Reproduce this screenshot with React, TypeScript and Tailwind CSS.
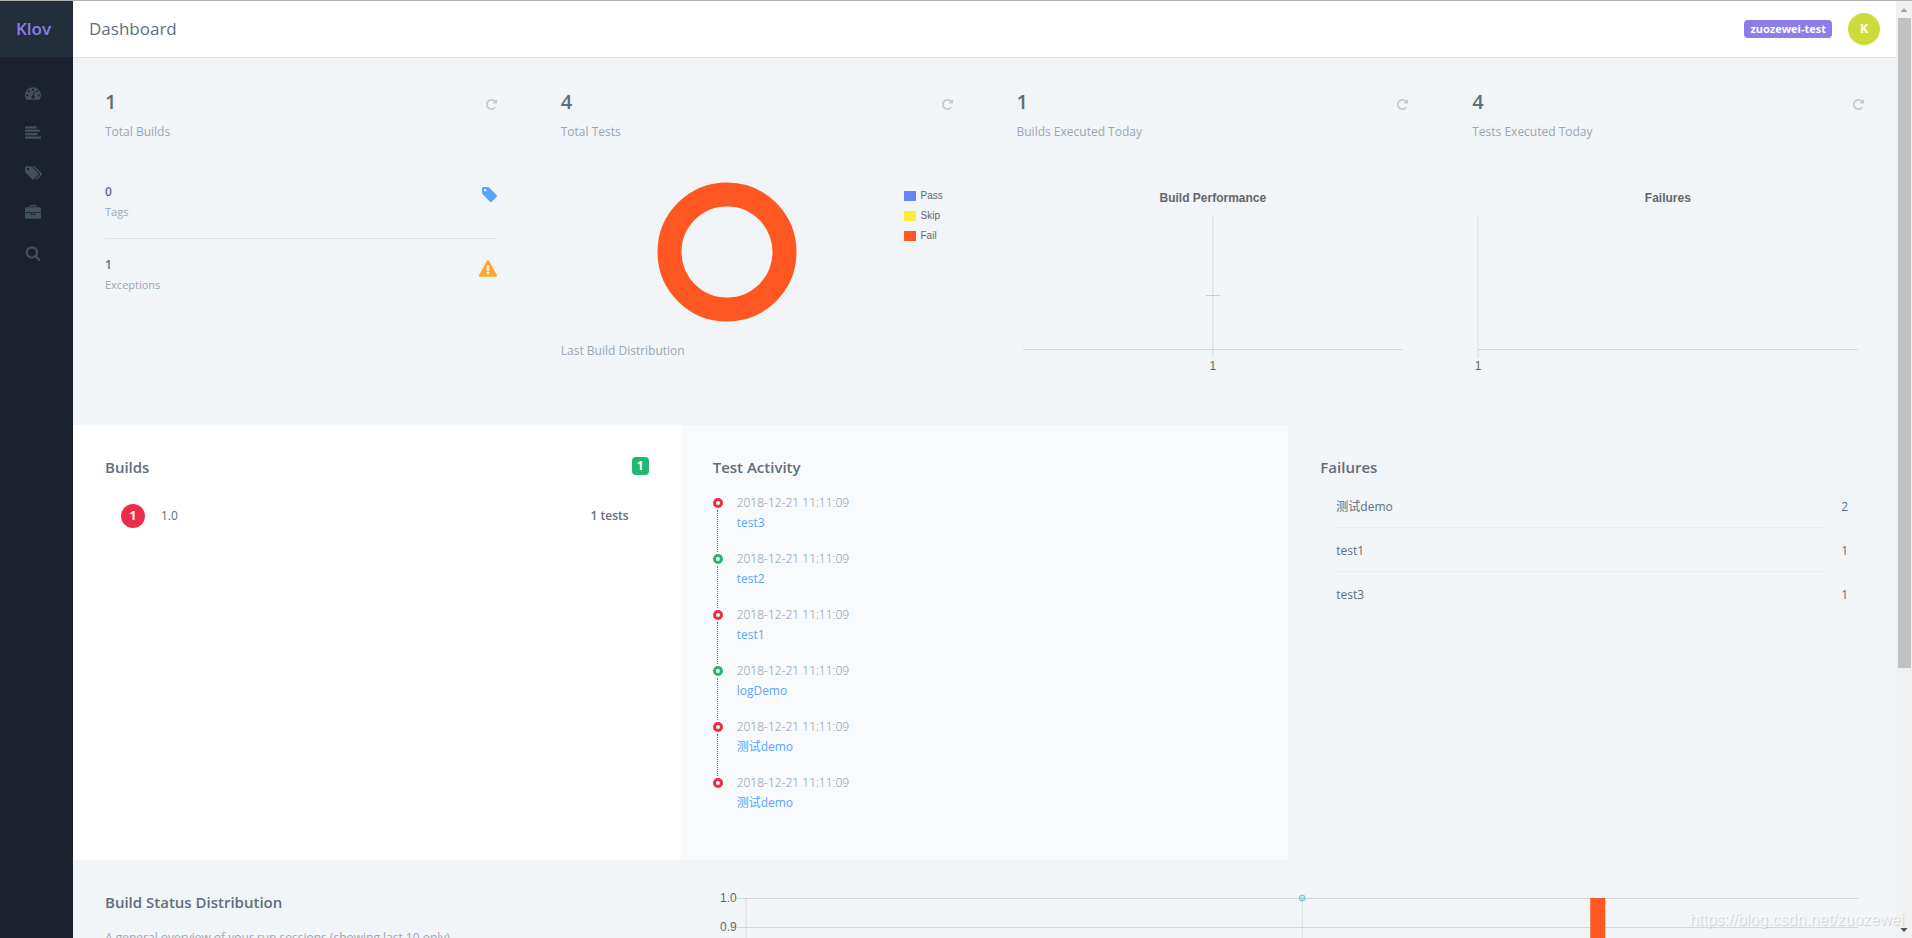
import React from "react";

const ICONS = {
  dashboard: {
    box: "0 0 1792 1792",
    d: "M384 1152q0-53-37.5-90.5t-90.5-37.5-90.5 37.5-37.5 90.5 37.5 90.5 90.5 37.5 90.5-37.5 37.5-90.5zm192-448q0-53-37.5-90.5t-90.5-37.5-90.5 37.5-37.5 90.5 37.5 90.5 90.5 37.5 90.5-37.5 37.5-90.5zm428 481l101-382q6-26-7.5-48.5t-38.5-29.5-48 6.5-30 39.5l-101 382q-60 5-107 43.5t-63 98.5q-20 77 20 146t117 89 146-20 89-117q16-60-6-117t-72-91zm660-33q0-53-37.5-90.5t-90.5-37.5-90.5 37.5-37.5 90.5 37.5 90.5 90.5 37.5 90.5-37.5 37.5-90.5zm-640-640q0-53-37.5-90.5t-90.5-37.5-90.5 37.5-37.5 90.5 37.5 90.5 90.5 37.5 90.5-37.5 37.5-90.5zm448 192q0-53-37.5-90.5t-90.5-37.5-90.5 37.5-37.5 90.5 37.5 90.5 90.5 37.5 90.5-37.5 37.5-90.5zm320 448q0 261-141 483-19 29-54 29h-1402q-35 0-54-29-141-221-141-483 0-182 71-348t191-286 286-191 348-71 348 71 286 191 191 286 71 348z",
  },
  list: {
    box: "0 0 1792 1792",
    d: "M1792 1344v128q0 26-19 45t-45 19h-1664q-26 0-45-19t-19-45v-128q0-26 19-45t45-19h1664q26 0 45 19t19 45zm-384-384v128q0 26-19 45t-45 19h-1280q-26 0-45-19t-19-45v-128q0-26 19-45t45-19h1280q26 0 45 19t19 45zm256-384v128q0 26-19 45t-45 19h-1536q-26 0-45-19t-19-45v-128q0-26 19-45t45-19h1536q26 0 45 19t19 45zm-384-384v128q0 26-19 45t-45 19h-1152q-26 0-45-19t-19-45v-128q0-26 19-45t45-19h1152q26 0 45 19t19 45z",
  },
  tags: {
    box: "120 0 1792 1792",
    d: "M576 448q0-53-37.5-90.5t-90.5-37.5-90.5 37.5-37.5 90.5 37.5 90.5 90.5 37.5 90.5-37.5 37.5-90.5zm1067 576q0 53-37 90l-491 492q-39 37-91 37-53 0-90-37l-715-716q-38-37-64.5-101t-26.5-117v-416q0-52 38-90t90-38h416q53 0 117 26.5t102 64.5l715 714q37 39 37 91zm384 0q0 53-37 90l-491 492q-39 37-91 37-36 0-59-14t-53-45l470-470q37-37 37-90 0-52-37-91l-715-714q-38-38-102-64.5t-117-26.5h224q53 0 117 26.5t102 64.5l715 714q37 39 37 91z",
  },
  briefcase: {
    box: "0 0 1792 1792",
    d: "M640 256h512v-128h-512v128zm1152 640v480q0 66-47 113t-113 47h-1472q-66 0-113-47t-47-113v-480h672v160q0 26 19 45t45 19h320q26 0 45-19t19-45v-160h672zm-768 0v128h-256v-128h256zm768-480v384h-1792v-384q0-66 47-113t113-47h352v-160q0-40 28-68t68-28h576q40 0 68 28t28 68v160h352q66 0 113 47t47 113z",
  },
  search: {
    box: "0 0 1792 1792",
    d: "M1216 832q0-185-131.5-316.5t-316.5-131.5-316.5 131.5-131.5 316.5 131.5 316.5 316.5 131.5 316.5-131.5 131.5-316.5zm512 832q0 52-38 90t-90 38q-54 0-90-38l-343-342q-179 124-399 124-143 0-273.5-55.5t-225-150-150-225-55.5-273.5 55.5-273.5 150-225 225-150 273.5-55.5 273.5 55.5 225 150 150 225 55.5 273.5q0 220-124 399l343 343q37 37 37 90z",
  },
  repeat: {
    box: "128 128 1536 1536",
    d: "M1664 256v448q0 26-19 45t-45 19h-448q-42 0-59-40-17-39 14-69l138-138q-148-137-349-137-104 0-198.5 40.5t-163.5 109.5-109.5 163.5-40.5 198.5 40.5 198.5 109.5 163.5 163.5 109.5 198.5 40.5q119 0 225-52t179-147q7-10 23-12 15 0 25 9l137 138q9 8 9.5 20.5t-7.5 22.5q-109 132-264 204.5t-327 72.5q-156 0-298-61t-245-164-164-245-61-298 61-298 164-245 245-164 298-61q147 0 284.5 55.5t244.5 156.5l130-129q29-31 70-14 39 17 39 59z",
  },
  tag: {
    box: "128 128 1515 1515",
    d: "M576 448q0-53-37.5-90.5t-90.5-37.5-90.5 37.5-37.5 90.5 37.5 90.5 90.5 37.5 90.5-37.5 37.5-90.5zm1067 576q0 53-37 90l-491 492q-39 37-91 37-53 0-90-37l-715-716q-38-37-64.5-101t-26.5-117v-416q0-52 38-90t90-38h416q53 0 117 26.5t102 64.5l715 714q37 39 37 91z",
  },
  warning: {
    box: "0 0 1792 1664",
    d: "M1024 1375v-190q0-14-9.5-23.5t-22.5-9.5h-192q-13 0-22.5 9.5t-9.5 23.5v190q0 14 9.5 23.5t22.5 9.5h192q13 0 22.5-9.5t9.5-23.5zm-2-374l18-459q0-12-10-19-13-11-24-11h-220q-11 0-24 11-10 7-10 21l17 457q0 10 10 16.5t24 6.5h185q14 0 23.5-6.5t10.5-16.5zm-14-934l768 1408q35 63-2 126-17 29-46.5 46t-63.5 17h-1536q-34 0-63.5-17t-46.5-46q-37-63-2-126l768-1408q17-31 47-49t65-18 65 18 47 49z",
  },
};

type IconName = keyof typeof ICONS;

function Icon({ name, className }: { name: IconName; className: string }) {
  return (
    <svg viewBox={ICONS[name].box} className={className} fill="currentColor" overflow="visible" aria-hidden="true">
      <path d={ICONS[name].d} fillRule="nonzero" />
    </svg>
  );
}

const NAV: { icon: IconName; label: string }[] = [
  { icon: "dashboard", label: "Dashboard" },
  { icon: "list", label: "Builds" },
  { icon: "tags", label: "Tags" },
  { icon: "briefcase", label: "Projects" },
  { icon: "search", label: "Search" },
];

function Sidebar() {
  return (
    <aside className="flex w-[73px] shrink-0 flex-col bg-[#1b222d]">
      <a href="#" className="flex h-14 items-center bg-[#232e3b] pl-4 text-[17px] font-semibold text-[#8e7ce6]">
        Klov
      </a>
      <nav className="mt-4 flex flex-col text-[#435060]">
        {NAV.map((item) => (
          <a key={item.icon} href="#" aria-label={item.label} className="flex h-10 items-center pl-[25px]">
            <Icon name={item.icon} className="size-4" />
          </a>
        ))}
      </nav>
    </aside>
  );
}

function Stat({ value, label, children }: { value: string; label: string; children: React.ReactNode }) {
  return (
    <div className="px-8 pt-7">
      <div className="flex h-8 items-center justify-between">
        <span className="text-xl font-semibold">{value}</span>
        <button type="button" aria-label="Refresh" className="pt-1 text-[#c3cad1]">
          <Icon name="repeat" className="size-[11px]" />
        </button>
      </div>
      <p className="mt-1 text-[12px] leading-5 text-[#9aa7b2]">{label}</p>
      <div className="mt-10">{children}</div>
    </div>
  );
}

function Counter({ value, label, children }: { value: string; label: string; children: React.ReactNode }) {
  return (
    <div className="flex items-start justify-between">
      <div>
        <p className="text-[12px] leading-5 font-semibold">{value}</p>
        <p className="text-[11px] leading-5 text-[#9aa7b2]">{label}</p>
      </div>
      <div className="mt-[5px]">{children}</div>
    </div>
  );
}

const LEGEND = [
  { name: "Pass", color: "bg-[#6485f5]" },
  { name: "Skip", color: "bg-[#ffeb3b]" },
  { name: "Fail", color: "bg-[#ff5722]" },
];

const CHART_TEXT = "font-['Liberation_Sans',Arial,sans-serif] text-[12px]";

function AxisChart({ title, centered }: { title: string; centered?: boolean }) {
  const x = centered ? "50%" : "0";
  return (
    <div className="px-1.5">
      <svg className="block h-48 w-full overflow-visible" role="img" aria-label={title}>
        <text x="50%" y="20" textAnchor="middle" fill="#666" className={`${CHART_TEXT} font-bold`}>
          {title}
        </text>
        <line x1={x} x2={x} y1="33" y2="176" stroke="#000" strokeOpacity="0.1" />
        <line x1="0" x2="100%" y1="167.5" y2="167.5" stroke="#000" strokeOpacity="0.12" />
        {centered && (
          <svg x="50%" y="113" overflow="visible">
            <line x1="-7" x2="7" y1="0.5" y2="0.5" stroke="#000" strokeOpacity="0.16" />
          </svg>
        )}
        <text x={x} y="188" textAnchor="middle" fill="#666" className={CHART_TEXT}>
          1
        </text>
      </svg>
    </div>
  );
}

const ACTIVITY = [
  { name: "test3", pass: false },
  { name: "test2", pass: true },
  { name: "test1", pass: false },
  { name: "logDemo", pass: true },
  { name: "测试demo", pass: false },
  { name: "测试demo", pass: false },
];

const FAILURES = [
  { name: "测试demo", count: 2 },
  { name: "test1", count: 1 },
  { name: "test3", count: 1 },
];

function Heading({ children }: { children: React.ReactNode }) {
  return <h2 className="text-[15px] leading-5 font-semibold">{children}</h2>;
}

function Timeline() {
  return (
    <ul className="mt-[21px]">
      {ACTIVITY.map((item, i) => (
        <li key={i} className="flex h-14 gap-3.5">
          <div className="flex w-2.5 flex-col items-center">
            <span
              className={`size-2.5 shrink-0 rounded-full border-3 bg-white ${item.pass ? "border-[#22b66e]" : "border-[#ea2e49]"}`}
            />
            {i < ACTIVITY.length - 1 && (
              <span
                className={`my-0.5 flex-1 border-l border-dotted ${item.pass ? "border-[#22b66e]" : "border-[#ea2e49]"}`}
              />
            )}
          </div>
          <div className="-mt-[5px] text-[12px] leading-5">
            <p className="font-light text-[#85929e]">2018-12-21 11:11:09</p>
            <a href="#" className="text-[#58a5fb]">
              {item.name}
            </a>
          </div>
        </li>
      ))}
    </ul>
  );
}

function StatusChart() {
  return (
    <div className="flex pr-[6px]">
      <div className={`-mt-2 w-6 shrink-0 text-right text-[#666] ${CHART_TEXT}`}>
        <p className="h-[29px] leading-7">1.0</p>
        <p className="h-[29px] leading-7">0.9</p>
      </div>
      <div className="min-w-0 flex-1 pl-[9px]">
        <svg className="block h-16 w-full overflow-visible" role="img" aria-label="Build status chart">
          <svg overflow="visible">
            <line x1="-9" x2="100%" y1="6.5" y2="6.5" stroke="#000" strokeOpacity="0.12" />
            <line x1="-9" x2="100%" y1="35.5" y2="35.5" stroke="#000" strokeOpacity="0.12" />
            <line x1="0" x2="0" y1="6" y2="100%" stroke="#000" strokeOpacity="0.1" />
            <line x1="50%" x2="50%" y1="6" y2="100%" stroke="#000" strokeOpacity="0.1" />
          </svg>
          <circle cx="50%" cy="6" r="3" fill="#4bc0c0" fillOpacity="0.3" stroke="#4bc0c0" strokeOpacity="0.8" />
          <rect x="75.9%" y="6" width="15" height="58" fill="#ff5722" />
        </svg>
      </div>
    </div>
  );
}

function Scrollbar() {
  return (
    <div className="flex w-4 shrink-0 flex-col items-center bg-[#f1f1f1]" aria-hidden="true">
      <svg viewBox="0 0 16 17" className="h-[17px] w-4">
        <path d="M4.5 11h7L8 7z" fill="#a3a3a3" />
      </svg>
      <div className="flex w-full flex-1 justify-center">
        <div className="h-[72%] w-[13px] bg-[#c1c1c1]" />
      </div>
      <svg viewBox="0 0 16 17" className="h-[17px] w-4">
        <path d="M4.5 7h7L8 11z" fill="#505050" />
      </svg>
    </div>
  );
}

export default function App() {
  return (
    <div className="relative flex h-screen overflow-hidden border-t border-[#b0b0b0] bg-[#f1f5f8] font-['Open_Sans','Noto_Sans_CJK_SC',sans-serif] text-[#5f6e7d]">
      <Sidebar />
      <div className="min-w-0 flex-1 overflow-hidden">
        <header className="flex h-[57px] items-center justify-between border-b border-[#dfe4e8] bg-white px-4">
          <h1 className="text-[17px]">Dashboard</h1>
          <div className="flex items-center gap-4">
            <a href="#" className="rounded bg-[#8e7cea] px-1.5 text-[11px] leading-[18px] font-bold text-white">
              zuozewei-test
            </a>
            <button
              type="button"
              className="flex size-8 items-center justify-center rounded-full bg-[#cddc39] text-[12px] font-bold text-white"
            >
              K
            </button>
          </div>
        </header>

        <section className="grid grid-cols-4 pb-[51px]">
          <Stat value="1" label="Total Builds">
            <div className="border-b border-[#dfe4e8] pb-4">
              <Counter value="0" label="Tags">
                <Icon name="tag" className="size-[15px] text-[#58a5fb]" />
              </Counter>
            </div>
            <div className="pt-4">
              <Counter value="1" label="Exceptions">
                <Icon name="warning" className="h-[17px] w-[18px] text-[#ffa62b]" />
              </Counter>
            </div>
          </Stat>
          <Stat value="4" label="Total Tests">
            <div className="flex">
              <div className="flex flex-1 justify-center">
                <svg viewBox="0 0 140 140" className="size-[140px]" role="img" aria-label="Last build distribution">
                  <circle cx="70" cy="70" r="57.5" fill="none" stroke="#ff5722" strokeWidth="24" />
                </svg>
              </div>
              <ul className="w-[60px] pt-1 pl-[11px] font-['Liberation_Sans',Arial,sans-serif] text-[10px] leading-5 text-[#666]">
                {LEGEND.map((entry) => (
                  <li key={entry.name} className="flex items-center gap-[5px]">
                    <span className={`h-2.5 w-3 ${entry.color}`} />
                    {entry.name}
                  </li>
                ))}
              </ul>
            </div>
            <p className="mt-[19px] text-[12px] leading-5 text-[#9aa7b2]">Last Build Distribution</p>
          </Stat>
          <Stat value="1" label="Builds Executed Today">
            <AxisChart title="Build Performance" centered />
          </Stat>
          <Stat value="4" label="Tests Executed Today">
            <AxisChart title="Failures" />
          </Stat>
        </section>

        <section className="grid grid-cols-3">
          <div className="bg-white px-8 pt-8">
            <div className="flex items-start justify-between">
              <Heading>Builds</Heading>
              <span className="rounded bg-[#22b66e] px-[5px] text-[12px] leading-[18px] font-bold text-white">1</span>
            </div>
            <div className="mt-[27px] flex items-center gap-4 pr-5 pl-4 text-[12px]">
              <span className="flex size-6 items-center justify-center rounded-full bg-[#ea2e49] font-bold text-white">
                1
              </span>
              <a href="#">1.0</a>
              <span className="ml-auto font-semibold">1 tests</span>
            </div>
          </div>
          <div className="bg-[#f9fafc] px-8 pt-8 pb-[26px]">
            <Heading>Test Activity</Heading>
            <Timeline />
          </div>
          <div className="px-8 pt-8">
            <Heading>Failures</Heading>
            <div className="mt-[7px] pl-4">
              <table className="w-full border-separate border-spacing-0 text-[12px]">
                <tbody>
                  {FAILURES.map((row, i) => (
                    <tr key={row.name}>
                      <td className={i < FAILURES.length - 1 ? "h-11 border-b border-[#e8edf0] pt-0.5" : "h-11 pt-0.5"}>
                        {row.name}
                      </td>
                      <td className="w-[39px] pt-0.5 pr-4 text-right">{row.count}</td>
                    </tr>
                  ))}
                </tbody>
              </table>
            </div>
          </div>
        </section>

        <section className="grid grid-cols-3">
          <div className="px-8 pt-8">
            <Heading>Build Status Distribution</Heading>
            <p className="mt-4 text-[12px] leading-5 text-[#9aa7b2]">
              A general overview of your run sessions (showing last 10 only)
            </p>
          </div>
          <div className="col-span-2 px-8 pt-8">
            <StatusChart />
          </div>
        </section>
      </div>
      <Scrollbar />
      <p className="absolute right-2 bottom-1.5 font-['Liberation_Sans',Arial,sans-serif] text-base text-white/70 [text-shadow:1px_1px_1px_rgba(0,0,0,0.16)]">
        https://blog.csdn.net/zuozewei
      </p>
    </div>
  );
}
